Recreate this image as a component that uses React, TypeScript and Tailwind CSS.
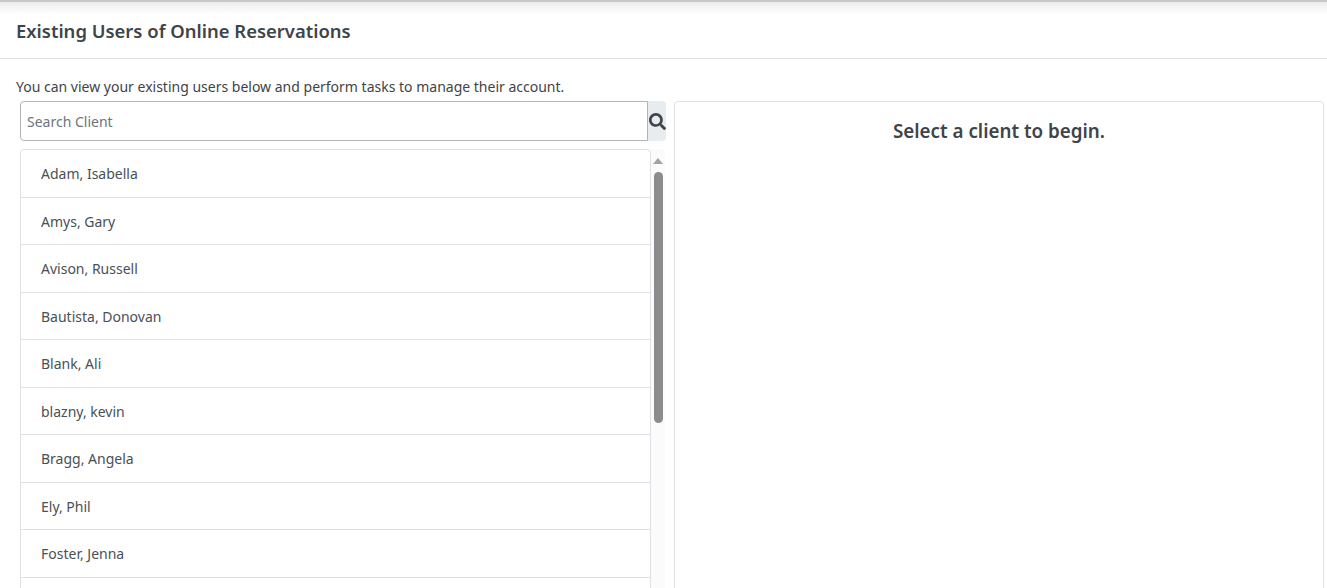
import { FaSearch } from "react-icons/fa";

const clients = [
  "Adam, Isabella",
  "Amys, Gary",
  "Avison, Russell",
  "Bautista, Donovan",
  "Blank, Ali",
  "blazny, kevin",
  "Bragg, Angela",
  "Ely, Phil",
  "Foster, Jenna",
  "",
];

export default function App() {
  return (
    <div className="h-[588px] overflow-hidden bg-white font-['Noto_Sans',sans-serif] text-[14px] text-[#495057]">
      <div className="h-[2px] bg-[#c8c8c8]" />
      <div className="-mb-[12px] h-[12px] bg-gradient-to-b from-[#ececec] to-white" />
      <header className="flex h-[57px] items-center border-b border-[#dee2e6] px-4 pt-[1px]">
        <h1 className="text-[18.45px] font-semibold text-[#3f4449]">Existing Users of Online Reservations</h1>
      </header>
      <p className="mt-[17px] h-[25px] pl-4 text-[14px] leading-[21px] text-[#3f4449]">
        You can view your existing users below and perform tasks to manage their account.
      </p>
      <div className="flex gap-2 pl-5 pr-[3px]">
        <section className="w-[646px] shrink-0">
          <div className="flex h-[40px]">
            <input
              placeholder="Search Client"
              className="h-full min-w-0 flex-1 rounded-l border border-[#b4b4b4] px-[6px] text-[14px] outline-none placeholder:text-[#6c757d]"
            />
            <button className="flex w-[18px] items-center justify-center rounded-r bg-[#e9ecef]">
              <FaSearch size={17} className="shrink-0 text-[#3c444c]" />
            </button>
          </div>
          <div className="mt-2 flex">
            <ul className="w-[631px] shrink-0 rounded-t border border-[#dee2e6]">
              {clients.map((name, i) => (
                <li key={i} className="flex h-[47.5px] items-center border-b border-[#dee2e6] pl-5 pt-[0.6px] last:border-b-0">
                  {name}
                </li>
              ))}
            </ul>
            <div className="w-[14px] bg-[#fbfbfb]">
              <div className="mx-auto mt-[9px] h-0 w-0 border-x-[5px] border-b-[6px] border-x-transparent border-b-[#a3a3a3]" />
              <div className="ml-[3px] mt-[8px] h-[251px] w-[9px] rounded-full bg-[#8c8c8c]" />
            </div>
          </div>
        </section>
        <section className="h-[520px] flex-1 rounded border border-[#dee2e6] pt-[16px] text-center">
          <h2 className="text-[18.8px] font-semibold leading-[27px] text-[#3f4449]">Select a client to begin.</h2>
        </section>
      </div>
    </div>
  );
}
